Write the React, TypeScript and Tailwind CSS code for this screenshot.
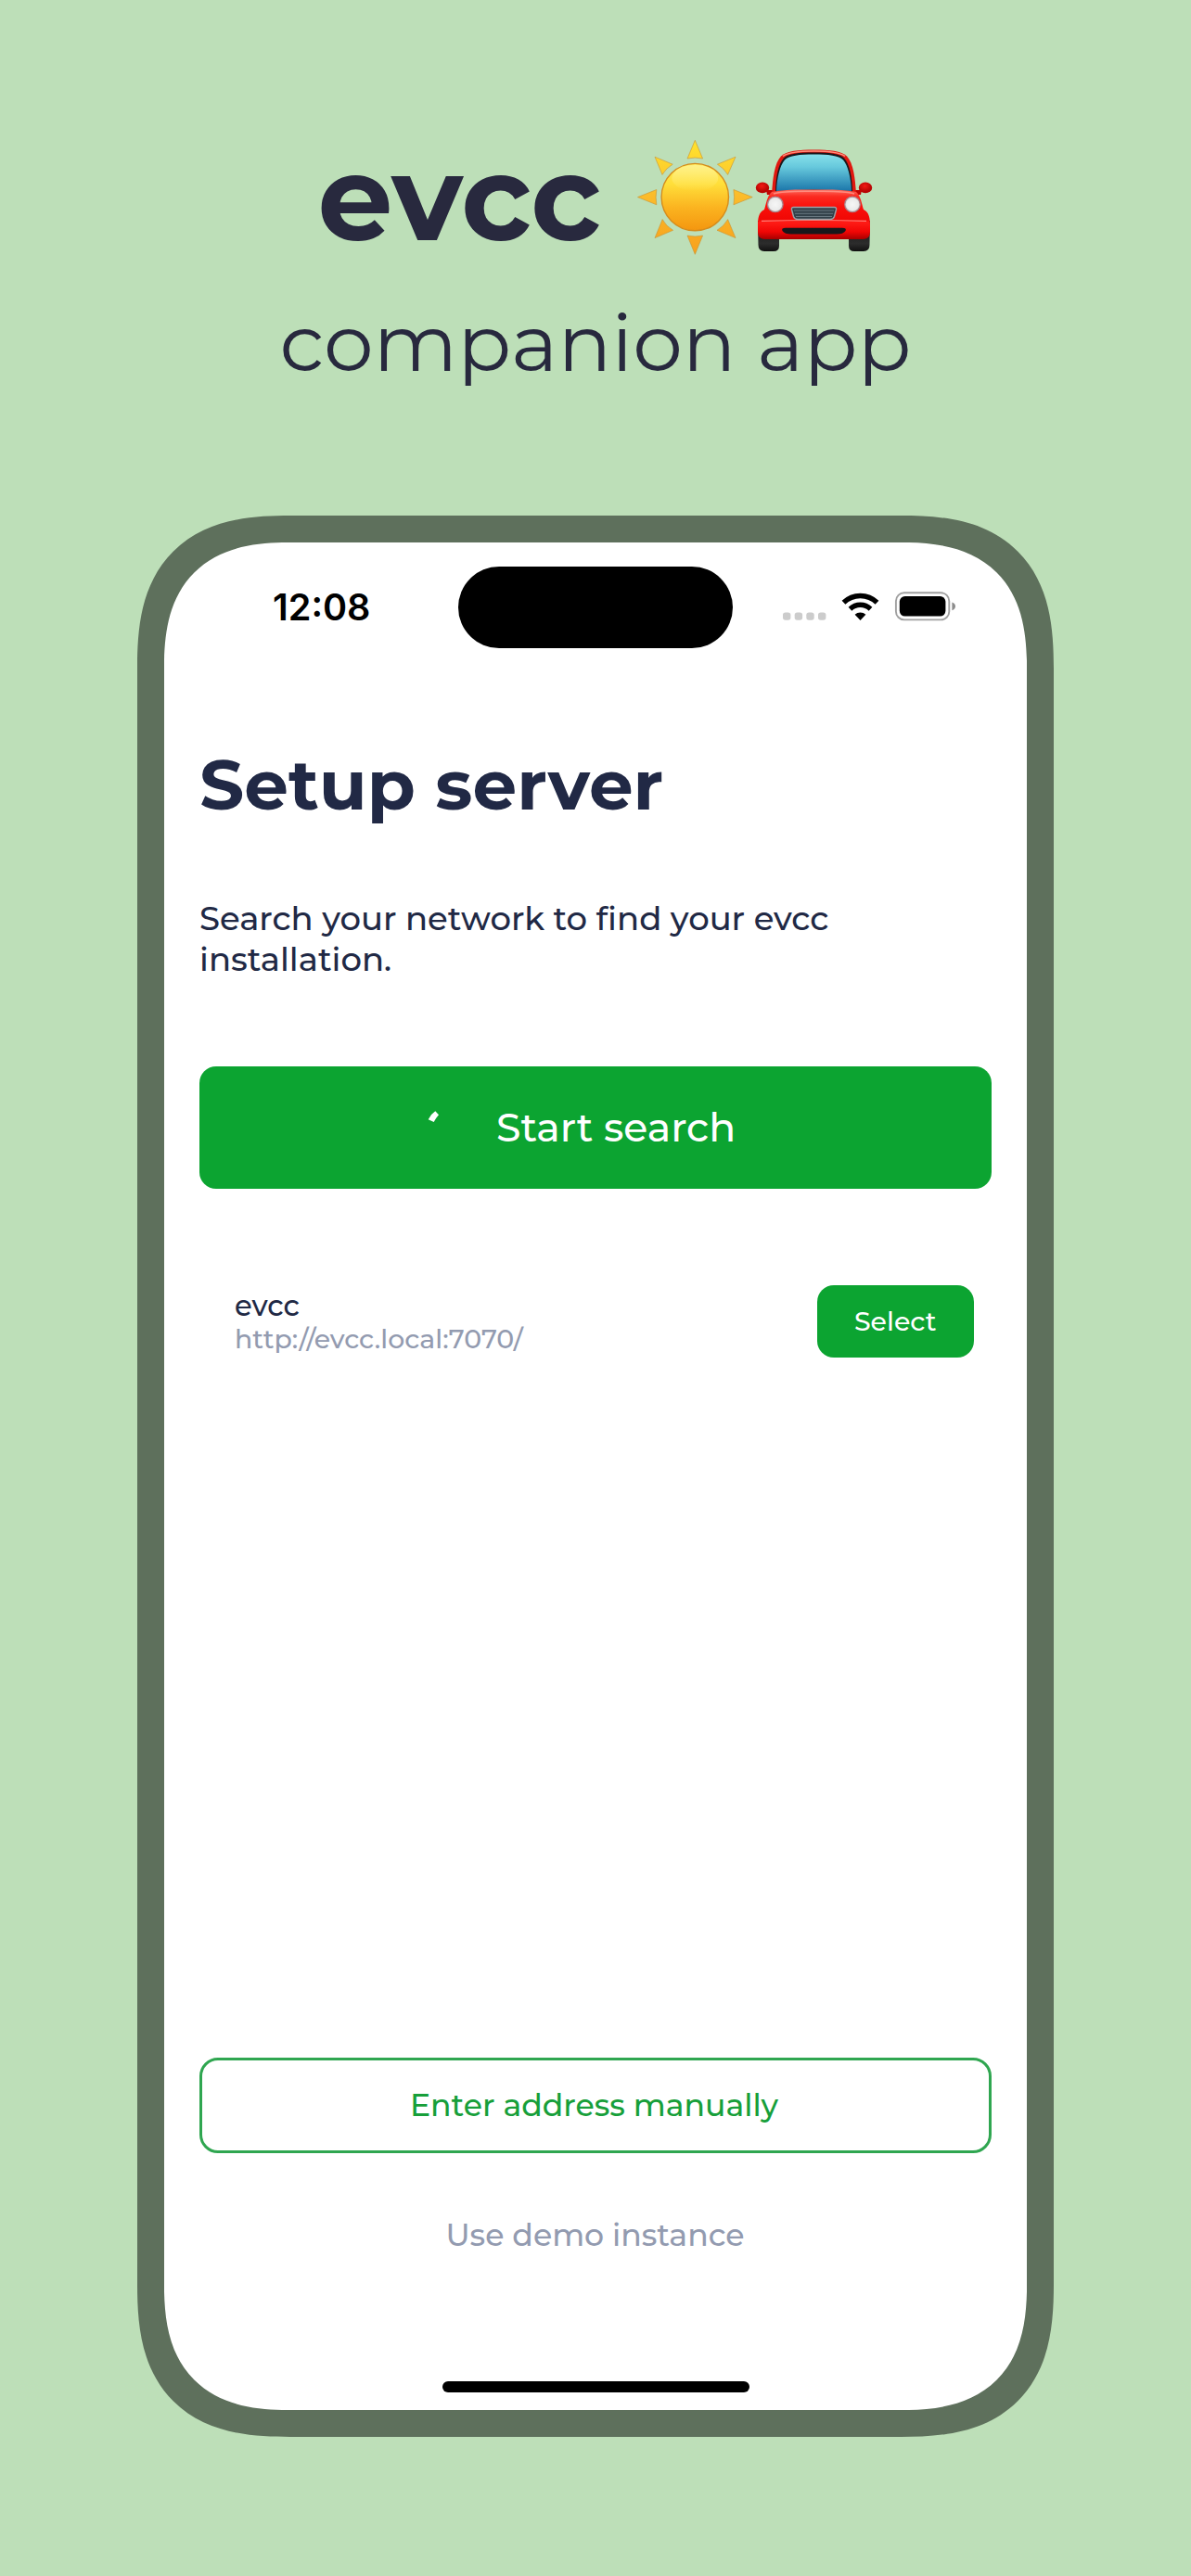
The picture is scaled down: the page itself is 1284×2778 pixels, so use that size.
import React from "react";

function SunAndCar() {
  return (
    <svg className="mt-[2px] ml-[32px] block shrink-0" width="270" height="140" viewBox="0 0 270 140">
      <defs>
        <linearGradient id="sunFill" x1="0" y1="0" x2="0" y2="1">
          <stop offset="0" stopColor="#ffe95c" />
          <stop offset="0.3" stopColor="#ffdf3a" />
          <stop offset="0.65" stopColor="#fbb420" />
          <stop offset="1" stopColor="#f4960f" />
        </linearGradient>
        <linearGradient id="sunShine" x1="0" y1="0" x2="0" y2="1">
          <stop offset="0" stopColor="#fff7a8" stopOpacity="0.6" />
          <stop offset="1" stopColor="#fff7a8" stopOpacity="0" />
        </linearGradient>
        <linearGradient id="rays" gradientUnits="userSpaceOnUse" x1="0" y1="10" x2="0" y2="135">
          <stop offset="0" stopColor="#ffe52e" />
          <stop offset="0.5" stopColor="#fbbb2a" />
          <stop offset="1" stopColor="#f7a01c" />
        </linearGradient>
        <linearGradient id="glass" x1="0" y1="0" x2="0" y2="1">
          <stop offset="0" stopColor="#86e0ea" />
          <stop offset="0.35" stopColor="#66c8dc" />
          <stop offset="1" stopColor="#1b76aa" />
        </linearGradient>
        <linearGradient id="hood" x1="0" y1="0" x2="0" y2="1">
          <stop offset="0" stopColor="#ff6a5c" />
          <stop offset="0.14" stopColor="#fb2a20" />
          <stop offset="0.35" stopColor="#fa0f0b" />
          <stop offset="0.6" stopColor="#f00805" />
          <stop offset="0.66" stopColor="#ff1c16" />
          <stop offset="0.85" stopColor="#f00605" />
          <stop offset="1" stopColor="#a80000" />
        </linearGradient>
        <linearGradient id="tyre" x1="0" y1="0" x2="0" y2="1">
          <stop offset="0" stopColor="#111" />
          <stop offset="0.75" stopColor="#2c2c2c" />
          <stop offset="1" stopColor="#111" />
        </linearGradient>
        <radialGradient id="lamp">
          <stop offset="0" stopColor="#f6f6f6" />
          <stop offset="0.75" stopColor="#ebebeb" />
          <stop offset="1" stopColor="#cfcfcf" />
        </radialGradient>
        <radialGradient id="mirror" cx="0.45" cy="0.35">
          <stop offset="0" stopColor="#f21a14" />
          <stop offset="1" stopColor="#b80503" />
        </radialGradient>
      </defs>
      {/* sun */}
      <g fill="url(#rays)" stroke="#c99534" strokeOpacity="0.7" strokeWidth="0.9" strokeLinejoin="round">
        <path d="M69.3 11.3L77.6 31Q69.3 29.2 61 31Z" />
        <path d="M69.3 134.3L77.6 114Q69.3 116 61 114Z" />
        <path d="M7.5 72.6L27.8 64.5Q26.4 72.6 27.8 80.8Z" />
        <path d="M131.2 72.6L110.9 64.5Q112.3 72.6 110.9 80.8Z" />
        <path d="M26 29.2L45.2 37.2Q38 41.4 34 48.4Z" />
        <path d="M113 29.2L93.4 37.2Q100.6 41.4 104.6 48.4Z" />
        <path d="M26 116.6L45.6 108.3Q38 104 34.2 96.6Z" />
        <path d="M113 116.6L93 108.3Q100.6 104 104.6 96.6Z" />
      </g>
      <circle cx="69.3" cy="72.6" r="36.2" fill="url(#sunFill)" stroke="#d58c1c" strokeWidth="1.4" />
      <ellipse cx="69.3" cy="52" rx="25" ry="14" fill="url(#sunShine)" />
      {/* tyres */}
      <path d="M137 98H160V125Q160 131 154 131H144Q137.5 131 137.5 124Z" fill="url(#tyre)" />
      <path d="M258 98H235V125Q235 131 241 131H251Q257.5 131 257.5 124Z" fill="url(#tyre)" />
      {/* mirrors */}
      <ellipse cx="142" cy="62.4" rx="7.2" ry="5.9" fill="url(#mirror)" />
      <ellipse cx="253" cy="62.4" rx="7.2" ry="5.9" fill="url(#mirror)" />
      <path d="M146 65H154V70H147ZM249 65H241V70H248Z" fill="#c10503" />
      {/* cabin */}
      <path d="M152 70C153 52 155 36 162 28.5C168 22.5 181 21.5 197.5 21.5C214 21.5 227 22.5 233 28.500C240 36 242 52 243 70Z" fill="#e0170f" />
      <path d="M164 28.5C170 24 181 23 197.5 23C214 23 225 24 231 28.5" fill="none" stroke="#ff8f7c" strokeWidth="1.5" />
      <path d="M156 68C156 52 159 37 165 30.5C170 25.5 181 24.500 197.5 24.500C214 24.500 225 25.5 230 30.5C236 37 239 52 239 68Z" fill="#18181c" />
      <path d="M157 66C157.5 52 161 38 166 32.5C171 27.5 182 26.5 197.5 26.5C213 26.5 224 27.5 229 32.5C234 38 237.5 52 238 66Q218 64.5 197.5 64.5Q177 64.5 157 66Z" fill="url(#glass)" />
      {/* body */}
      <path d="M152 67C166 64 182 64.5 197.5 64.5S229 64 243 67C248 71 249 80 251 86C257 89 258 95 258 103V110Q258 118 250 118H145Q137 118 137 110V103C137 95 138 89 144 86C146 80 147 71 152 67Z" fill="url(#hood)" />
      <path d="M141 98.4Q197.5 96.6 254 98.4" fill="none" stroke="#ff8078" strokeWidth="1.2" />
      <path d="M154 69C166 65.6 182 66.3 197.5 66.3S229 65.6 241 69" fill="none" stroke="#ff9a8c" strokeOpacity="0.8" strokeWidth="1.6" />
      {/* headlights */}
      <circle cx="155.8" cy="80.4" r="8.300" fill="url(#lamp)" stroke="#a8838a" strokeWidth="1.2" />
      <circle cx="239" cy="80.4" r="8.300" fill="url(#lamp)" stroke="#a8838a" strokeWidth="1.2" />
      {/* grille */}
      <path d="M175.5 83.5H219.5Q222 83.5 221.5 86L219.5 93.5Q218.5 96.5 215 96.5H180Q176.5 96.5 175.5 93.5L173.5 86Q173 83.5 175.5 83.5Z" fill="#33414a" stroke="#9da3a8" strokeWidth="1.4" />
      <path d="M176 87H219M177 90.3H218M178 93.5H217" stroke="#6f7f88" strokeWidth="0.9" />
      <path d="M167 105.8H228Q233 105.8 231.5 109Q229 112.600 222 112.600H173Q166 112.600 163.5 109Q162 105.8 167 105.8Z" fill="#17171b" />
    </svg>
  );
}

function StatusIcons() {
  return (
    <svg className="mt-[50px] block shrink-0" width="200" height="40" viewBox="840 635 200 40">
      <g fill="#cccccc">
        <rect x="844" y="660.4" width="8.4" height="8.4" rx="2.8" />
        <rect x="856.7" y="660.4" width="8.4" height="8.4" rx="2.8" />
        <rect x="869.3" y="660.4" width="8.4" height="8.4" rx="2.8" />
        <rect x="882" y="660.4" width="8.4" height="8.4" rx="2.8" />
      </g>
      <g fill="none" stroke="#000" strokeWidth="5.4">
        <path d="M909.5 649.8A25.8 25.8 0 0 1 945.5 649.8" />
        <path d="M916.5 656.7A16 16 0 0 1 938.5 656.7" />
      </g>
      <path d="M927.5 669L921.6 662.8A8.6 8.6 0 0 1 933.4 662.8Z" fill="#000" />
      <rect x="965.9" y="639.2" width="57.4" height="29.2" rx="9" fill="none" stroke="#a0a0a0" strokeWidth="1.9" />
      <rect x="969.8" y="643" width="49.6" height="21.6" rx="5.8" fill="#000" />
      <path d="M1026.4 649.6Q1030 651 1030 653.9T1026.4 658.2Z" fill="#8c8c8c" />
    </svg>
  );
}

export default function App() {
  return (
    <div className="flex h-[2778px] w-[1284px] flex-col overflow-hidden bg-[#bddfb8] font-['Montserrat','Inter',sans-serif] whitespace-nowrap">
      <header className="h-[556px] shrink-0 pt-[138px] text-[#28293e]">
        <div className="flex h-[150px] pl-[342.6px]">
          <h1 className="text-[128.4px] leading-[150px] font-bold">evcc</h1>
          <SunAndCar />
        </div>
        <p className="mt-[29px] text-center text-[85.5px] leading-[104px]">companion app</p>
      </header>

      <main className="mx-[148px] flex h-[2072px] shrink-0 flex-col rounded-[165px] border-[29px] border-[#5e705c] bg-white [corner-shape:superellipse(1.375)]">
        <div className="flex h-[215px] shrink-0 items-start">
          <div className="mt-[46px] ml-[117px] w-[200px] font-['Inter',sans-serif] text-[39.6px] leading-[48px] font-semibold text-black">12:08</div>
          <div className="mt-[26.3px] mr-[50px] h-[87.4px] w-[296px] rounded-full bg-black" />
          <StatusIcons />
        </div>

        <div className="flex flex-1 flex-col px-[38px] font-medium text-[#212945]">
          <h2 className="text-[75.6px] leading-[92px] font-bold">Setup server</h2>
          <p className="mt-[77px] text-[35.45px] leading-[43.5px]">
            Search your network to find your evcc
            <br />
            installation.
          </p>

          <button className="mt-[93.7px] flex h-[132.3px] items-center rounded-[18px] bg-[#0ca431] pl-[238px] text-[42.6px] text-white">
            <svg className="mr-[28px] block" width="54" height="54" viewBox="453 1189 54 54">
              <path d="M469.3 1198.3L473 1202.3Q470.5 1205 467.7 1210L461.7 1207.3Q464.5 1201.5 469.3 1198.3Z" fill="#fff" />
            </svg>
            <span className="pt-[2px]">Start search</span>
          </button>

          <div className="mt-[104px] flex h-[77.7px] items-center justify-between pr-[19.2px] pl-[38px]">
            <div className="pt-[2px]">
              <div className="text-[30.7px] leading-[37.5px]">evcc</div>
              <div className="text-[28.35px] leading-[34.8px] text-[#939bb0]">http://evcc.local:7070/</div>
            </div>
            <button className="h-[77.7px] w-[169.2px] rounded-[18px] bg-[#0ca431] text-[28.4px] text-white">Select</button>
          </div>

          <button className="mt-auto h-[102.7px] rounded-[20px] border-[3px] border-[#2fa650] pr-[3px] text-[33.1px] text-[#179f3a]">
            Enter address manually
          </button>
          <button className="mt-[68.7px] pr-[1px] text-[33.1px] leading-[40px] text-[#939bb0]">Use demo instance</button>
        </div>

        <div className="mt-[137.6px] mb-[19px] h-[12px] w-[331px] shrink-0 self-center rounded-full bg-black" />
      </main>
    </div>
  );
}
